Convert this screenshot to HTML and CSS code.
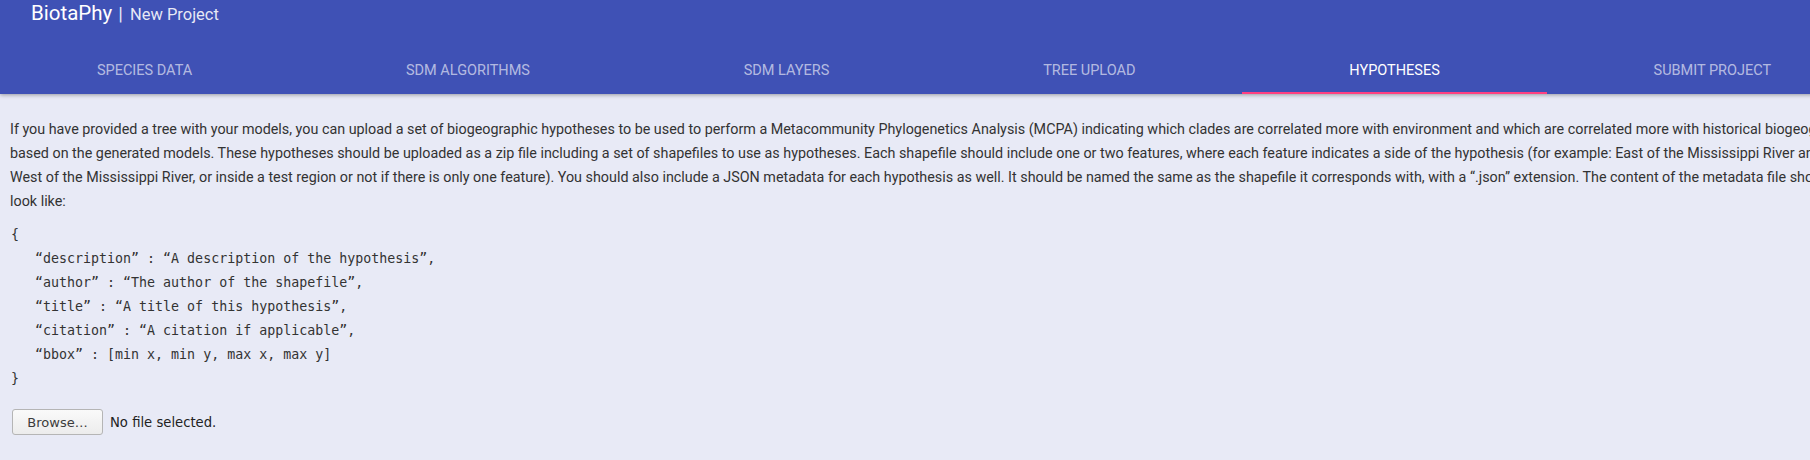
FILE: index.html
```html
<!DOCTYPE html>
<html lang="en">
<head>
<meta charset="utf-8">
<title>BiotaPhy | New Project</title>
<link rel="stylesheet" href="styles.css">
</head>
<body>
<div class="page">
<header class="appbar">
  <div class="titlebar">
    <span class="brand">BiotaPhy</span>
    <span class="sep">|</span>
    <span class="subtitle">New Project</span>
  </div>
  <nav class="tabs">
    <div class="tab">Species Data</div>
    <div class="tab">SDM Algorithms</div>
    <div class="tab">SDM Layers</div>
    <div class="tab">Tree Upload</div>
    <div class="tab active">Hypotheses</div>
    <div class="tab">Submit Project</div>
  </nav>
</header>
<main class="content">
  <p class="intro">If you have provided a tree with your models, you can upload a set of biogeographic hypotheses to be used to perform a Metacommunity Phylogenetics Analysis (MCPA) indicating which clades are correlated more with environment and which are correlated more with historical biogeography<br>based on the generated models. These hypotheses should be uploaded as a zip file including a set of shapefiles to use as hypotheses. Each shapefile should include one or two features, where each feature indicates a side of the hypothesis (for example: East of the Mississippi River and<br>West of the Mississippi River, or inside a test region or not if there is only one feature). You should also include a JSON metadata for each hypothesis as well. It should be named the same as the shapefile it corresponds with, with a “.json” extension. The content of the metadata file should<br>look like:</p>
<pre class="code">{
   “description” : “A description of the hypothesis”,
   “author” : “The author of the shapefile”,
   “title” : “A title of this hypothesis”,
   “citation” : “A citation if applicable”,
   “bbox” : [min x, min y, max x, max y]
}</pre>
  <div class="file-input">
    <button class="browse" type="button">Browse…</button>
    <span class="file-label">No file selected.</span>
  </div>
</main>
</div>
</body>
</html>
```

FILE: styles.css
```css
html, body {
  margin: 0;
  padding: 0;
}
body {
  background: #e8eaf6;
  width: 1810px;
  height: 460px;
  overflow: hidden;
  font-family: Roboto, "Liberation Sans", sans-serif;
}
.page {
  width: 1920px;
}
.appbar {
  background: #3f51b5;
  height: 94px;
  display: flex;
  flex-direction: column;
  box-shadow: 0 1px 4px rgba(0, 0, 0, 0.35);
  position: relative;
  z-index: 1;
}
.titlebar {
  height: 46px;
  display: flex;
  align-items: baseline;
  padding-left: 31px;
  color: #fff;
  line-height: 26px;
}
.brand {
  font-size: 20.5px;
}
.sep {
  font-size: 19px;
  margin-left: 6px;
  color: rgba(255, 255, 255, 0.9);
}
.subtitle {
  font-size: 16.5px;
  margin-left: 7px;
  color: rgba(255, 255, 255, 0.88);
}
.tabs {
  display: flex;
  height: 48px;
  margin-left: -10px;
  width: 1888px;
}
.tab {
  flex: 1 1 auto;
  height: 48px;
  box-sizing: border-box;
  display: flex;
  align-items: center;
  justify-content: center;
  text-transform: uppercase;
  font-size: 14.5px;
  color: rgba(255, 255, 255, 0.62);
  border-bottom: 2px solid transparent;
  padding-top: 2px;
}
.tab.active {
  color: #fff;
  border-bottom-color: #ff4081;
}
.content {
  padding: 0 10px;
  width: 1900px;
}
.intro {
  margin: 23px 0 10px;
  font-size: 14.33px;
  line-height: 24px;
  color: #333;
}
.code {
  margin: 0 0 18px 1px;
  font-family: "DejaVu Sans Mono", monospace;
  font-size: 13.3px;
  line-height: 24px;
  color: #333;
}
.file-input {
  display: flex;
  align-items: center;
  padding-left: 2px;
}
.browse {
  width: 91px;
  height: 26px;
  border: 1px solid #b5b5b5;
  border-radius: 3px;
  background: linear-gradient(#fafafa, #ececec);
  font-family: "DejaVu Sans", sans-serif;
  font-size: 13px;
  color: #3c3c3c;
  padding: 0;
}
.file-label {
  margin-left: 7px;
  font-family: "DejaVu Sans", sans-serif;
  font-size: 13.2px;
  color: #222;
}
```
